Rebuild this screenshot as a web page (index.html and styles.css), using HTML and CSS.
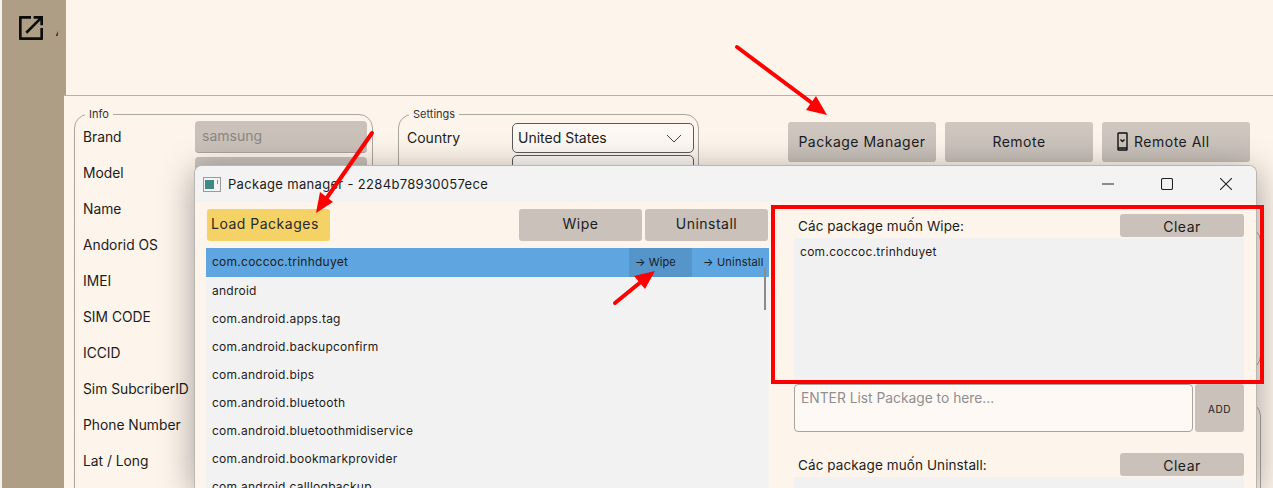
FILE: index.html
```html
<!DOCTYPE html>
<html lang="en">

<head>
  <meta charset="UTF-8" />
  <title>Package manager</title>
  <link rel="stylesheet" href="styles.css">
</head>

<body>
  <div class="app">
    <div class="side">
      <svg class="side-icon" viewBox="3 3 18 18"><path d="M19 19H5V5h7V3H3.5L3 3.5v17l.5.5h17l.5-.5V12h-2v7zM14 3v2h3.59l-9.83 9.83 1.41 1.41L19 6.41V10h2V3h-7z"/></svg>
      <span class="side-text">A</span>
    </div>
    <div class="main">
      <div class="top"></div>
      <div class="panel">
        <fieldset class="group info">
          <legend>Info</legend>
          <div class="row"><label>Brand</label><div class="field">samsung</div></div>
          <div class="row"><label>Model</label><div class="field"></div></div>
          <div class="row"><label>Name</label><div class="field"></div></div>
          <div class="row"><label>Andorid OS</label><div class="field"></div></div>
          <div class="row"><label>IMEI</label><div class="field"></div></div>
          <div class="row"><label>SIM CODE</label><div class="field"></div></div>
          <div class="row"><label>ICCID</label><div class="field"></div></div>
          <div class="row"><label>Sim SubcriberID</label><div class="field"></div></div>
          <div class="row"><label>Phone Number</label><div class="field"></div></div>
          <div class="row"><label>Lat / Long</label><div class="field"></div></div>
        </fieldset>
        <fieldset class="group settings">
          <legend>Settings</legend>
          <div class="set-row">
            <label>Country</label>
            <div class="select">United States
              <svg viewBox="0 0 16 9"><path d="M1 1l7 7 7-7"/></svg>
            </div>
          </div>
          <div class="set-row">
            <label></label>
            <div class="select"></div>
          </div>
        </fieldset>
        <div class="side-panel">
          <div class="actions">
            <div class="btn big">Package Manager</div>
            <div class="btn big">Remote</div>
            <div class="btn big remote-all">
              <svg class="phone" viewBox="0 0 11 19"><rect x="1" y="1" width="9" height="17" rx="0.5"/><path d="M3.5 7.5l2 2 2-2M1 16h9"/></svg>
              Remote All
            </div>
          </div>
          <div class="ghost first"></div>
          <div class="ghost last"></div>
        </div>
      </div>
    </div>
  </div>

  <!-- cua so package manager -->
  <div class="window">
    <div class="titlebar">
      <svg class="win-icon" viewBox="0 0 18 15"><rect x="0.5" y="0.5" width="17" height="14" fill="#f4f4f4" stroke="#9a9a9a"/><rect x="2" y="3" width="9" height="9" fill="#3f8a86"/><rect x="14" y="3" width="1" height="4" fill="#6fa3a0"/></svg>
      <span class="win-title">Package manager - 2284b78930057ece</span>
      <div class="win-btns">
        <svg viewBox="0 0 12 12"><path d="M0 6h12"/></svg>
        <svg viewBox="0 0 12 12"><rect x="0.5" y="0.5" width="11" height="11" rx="1.5"/></svg>
        <svg viewBox="0 0 12 12"><path d="M0 0l12 12M12 0L0 12"/></svg>
      </div>
    </div>
    <div class="win-body">
      <div class="left">
        <div class="toolbar">
          <div class="btn load">Load Packages</div>
          <div class="btn tool">Wipe</div>
          <div class="btn tool">Uninstall</div>
        </div>
        <div class="list">
          <div class="item selected">
            <span class="name">com.coccoc.trinhduyet</span>
            <span class="act hover">→ Wipe</span>
            <span class="act">→ Uninstall</span>
          </div>
          <div class="item">android</div>
          <div class="item">com.android.apps.tag</div>
          <div class="item">com.android.backupconfirm</div>
          <div class="item">com.android.bips</div>
          <div class="item">com.android.bluetooth</div>
          <div class="item">com.android.bluetoothmidiservice</div>
          <div class="item">com.android.bookmarkprovider</div>
          <div class="item">com.android.calllogbackup</div>
          <div class="scroll"></div>
        </div>
      </div>
      <div class="right">
        <div class="head">
          <span>Các package muốn Wipe:</span>
          <div class="btn clear">Clear</div>
        </div>
        <div class="box wipe-box">com.coccoc.trinhduyet</div>
        <div class="enter">
          <div class="input">ENTER List Package to here...</div>
          <div class="btn add">ADD</div>
        </div>
        <div class="head second">
          <span>Các package muốn Uninstall:</span>
          <div class="btn clear">Clear</div>
        </div>
        <div class="box"></div>
      </div>
    </div>
  </div>

  <!-- chu thich mau do -->
  <div class="highlight"></div>
  <svg class="arrows" viewBox="0 0 1273 488">
    <path class="shaft" d="M737 47L812 103"/>
    <path class="head-tip" d="M827 115L806 110L816 96z"/>
    <path class="shaft" d="M372 133L326 199"/>
    <path class="head-tip" d="M316 213L320 192L333 202z"/>
    <path class="shaft" d="M615 303L642 281"/>
    <path class="head-tip" d="M655 271L645 289L634 276z"/>
  </svg>
</body>

</html>
```

FILE: styles.css
```css
html,
body {
  margin: 0;
  padding: 0;
  height: 488px;
  overflow: hidden;
  background-color: #f6f3ef;
  font-family: "Inter", "Liberation Sans", sans-serif;
  font-size: 14px;
  color: #1c1c1c;
}

.app {
  display: flex;
  height: 488px;
  padding-left: 2px;
  box-sizing: border-box;
}

.side {
  flex: 0 0 64px;
  background-color: #ad9e85;
  padding: 16px 0 0 17px;
  box-sizing: border-box;
  display: flex;
  align-items: flex-start;
}

.side-icon {
  width: 24px;
  height: 24px;
  fill: #0c0c0c;
  flex: none;
}

.side-text {
  display: block;
  width: 2px;
  margin: 6px 0 0 13px;
  overflow: hidden;
  font-size: 14px;
  font-style: italic;
  line-height: 18px;
}

.main {
  flex: 1;
  min-width: 0;
  background-color: #fdf4eb;
}

.top {
  height: 95px;
}

.panel {
  margin-left: -2px;
  height: 393px;
  background-color: #fdf4eb;
  border-top: 1px solid #b5b0a9;
  box-sizing: border-box;
  display: flex;
  align-items: flex-start;
  padding: 12px 0 0 10px;
  overflow: hidden;
}

.group {
  margin: 0;
  padding: 1px 4px 0 8px;
  border: 1px solid #aaa6a0;
  border-radius: 14px;
  box-sizing: border-box;
  min-width: 0;
}

.group legend {
  padding: 0 4px;
  margin-left: 2px;
  font-size: 11px;
  line-height: 12px;
  color: #333;
}

.info {
  width: 299px;
  height: 400px;
}

.settings {
  width: 301px;
  height: 300px;
  margin-left: 25px;
}

.row {
  display: flex;
  align-items: center;
  height: 32px;
  margin-bottom: 4px;
}

.row label {
  width: 112px;
  flex: none;
  white-space: nowrap;
  font-size: 13.8px;
}

.field {
  flex: 1;
  height: 32px;
  line-height: 30px;
  padding-left: 7px;
  margin-right: 1px;
  box-sizing: border-box;
  background-color: #c9c1ba;
  border-radius: 4px;
  border-bottom: 1px solid #aaa49e;
  color: #8c8781;
}

.set-row {
  display: flex;
  align-items: center;
  margin-top: 2px;
}

.set-row label {
  width: 105px;
  flex: none;
  padding-bottom: 2px;
}

.select {
  flex: 1;
  height: 30px;
  line-height: 28px;
  padding: 0 6px 0 5px;
  box-sizing: border-box;
  background-color: #fdf8f3;
  border: 1px solid #5c5a58;
  border-radius: 5px;
  display: flex;
  justify-content: space-between;
  align-items: center;
}

.select svg {
  width: 16px;
  height: 9px;
  fill: none;
  stroke: #444;
  margin-right: 5px;
}

.side-panel {
  margin-left: 89px;
  padding-top: 14px;
  width: 480px;
}

.actions {
  display: flex;
  gap: 9px;
}

.ghost {
  width: 473px;
  border: 1px solid #aaa6a0;
  border-radius: 14px;
  box-sizing: border-box;
}

.first {
  height: 143px;
  margin-top: 65px;
}

.last {
  height: 120px;
  margin-top: 32px;
}

.btn {
  display: flex;
  align-items: center;
  justify-content: center;
  background-color: #c9c1ba;
  border-radius: 3px;
  letter-spacing: 0.5px;
  white-space: nowrap;
}

.big {
  width: 148px;
  height: 40px;
  padding-bottom: 1px;
  box-sizing: border-box;
  background: linear-gradient(#cfc7c0, #c6bfb8);
  font-size: 14px;
}

.remote-all {
  justify-content: flex-start;
  padding-left: 15px;
}

.phone {
  width: 11px;
  height: 19px;
  margin-right: 6px;
  fill: none;
  stroke: #111;
  stroke-width: 1.4;
}

.window {
  position: absolute;
  left: 194px;
  top: 165px;
  width: 1063px;
  height: 323px;
  background-color: #fdf4eb;
  border-top-left-radius: 8px;
  border-top-right-radius: 8px;
  box-shadow: 0 6px 34px rgba(0, 0, 0, 0.36);
  border: 1px solid #b9b5b0;
  border-bottom: none;
  box-sizing: border-box;
  overflow: hidden;
}

.titlebar {
  height: 36px;
  background-color: #f3f3f3;
  display: flex;
  align-items: center;
  padding-left: 8px;
}

.win-icon {
  width: 18px;
  height: 15px;
}

.win-title {
  margin-left: 7px;
  font-size: 13px;
  letter-spacing: 0.32px;
}

.win-btns {
  margin-left: auto;
  display: flex;
  gap: 47px;
  padding-right: 24px;
}

.win-btns svg {
  width: 12px;
  height: 12px;
  fill: none;
  stroke: #222;
  stroke-width: 1.1;
}

.win-body {
  display: flex;
  padding: 7px 0 0 11px;
}

.left {
  width: 563px;
  flex: none;
}

.toolbar {
  display: flex;
  gap: 3px;
  padding-left: 1px;
  padding-right: 1px;
}

.load {
  width: 123px;
  height: 32px;
  margin-right: auto;
  padding: 0 0 3px 4px;
  box-sizing: border-box;
  justify-content: flex-start;
  background-color: #f5d266;
  color: #2a2a2a;
  border-radius: 3px;
}

.tool {
  width: 123px;
  height: 32px;
  padding-bottom: 3px;
  box-sizing: border-box;
}

.list {
  position: relative;
  margin-top: 7px;
  height: 240px;
  background-color: #f2f2f2;
  font-size: 12px;
  letter-spacing: 0.25px;
  overflow: hidden;
}

.item {
  height: 28px;
  line-height: 27px;
  padding-left: 6px;
  white-space: nowrap;
}

.selected {
  height: 29px;
  background-color: #5fa6e0;
  display: flex;
  padding-left: 6px;
}

.name {
  margin-right: auto;
}

.act {
  font-size: 11px;
  letter-spacing: 0.2px;
  line-height: 28px;
  width: 66px;
  padding-left: 11px;
}

.hover {
  width: 57px;
  padding-left: 6px;
  background-color: #5595c9;
  letter-spacing: 0.1px;
}

.scroll {
  position: absolute;
  right: 3px;
  top: 20px;
  width: 2px;
  height: 42px;
  background-color: #8b8b8b;
}

.right {
  margin-left: 25px;
  width: 450px;
}

.head {
  display: flex;
  justify-content: space-between;
  align-items: center;
  height: 23px;
  margin-top: 5px;
  padding-left: 4px;
  font-size: 13.5px;
  letter-spacing: 0.1px;
  margin-bottom: 1px;
}

.second {
  margin-top: 21px;
}

.clear {
  width: 124px;
  height: 23px;
  padding-top: 2px;
  box-sizing: border-box;
  font-size: 14px;
  background-color: #c9c1ba;
}

.box {
  background-color: #f1f1f1;
  padding: 6px;
  font-size: 12px;
  letter-spacing: 0.28px;
  box-sizing: border-box;
  height: 100px;
}

.wipe-box {
  height: 146px;
}

.enter {
  display: flex;
  gap: 2px;
  height: 48px;
}

.input {
  flex: 1;
  border: 1px solid #a8a39e;
  border-radius: 4px;
  background-color: #fef9f5;
  padding: 5px 6px;
  box-sizing: border-box;
  color: #8f8f8f;
  font-size: 13.8px;
}

.add {
  width: 49px;
  font-size: 10px;
  padding-top: 2px;
  box-sizing: border-box;
}

.highlight {
  position: absolute;
  left: 771px;
  top: 205px;
  width: 493px;
  height: 179px;
  border: 4px solid #fe0000;
  box-sizing: border-box;
}

.arrows {
  position: absolute;
  left: 0;
  top: 0;
  width: 1273px;
  height: 488px;
}

.shaft {
  stroke: #fe0000;
  stroke-width: 4;
  stroke-linecap: round;
  fill: none;
}

.head-tip {
  fill: #fe0000;
}
```
